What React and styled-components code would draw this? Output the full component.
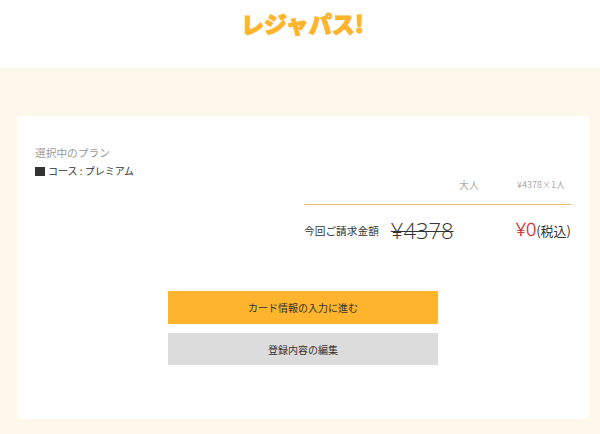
import React from "react";
import styled, { createGlobalStyle } from "styled-components";

const GlobalStyle = createGlobalStyle`
  html, body {
    margin: 0;
    padding: 0;
    background: #fff7ea;
    font-family: "Noto Sans CJK JP", "Noto Sans", sans-serif;
    color: #333;
  }
`;

export default function App() {
  return (
    <>
      <GlobalStyle />
      <Header>
        <Logo>レジャパス!</Logo>
      </Header>
      <Main>
        <Card>
          <Summary>
            <Plan>
              <PlanLabel>選択中のプラン</PlanLabel>
              <PlanCourse>
                <CourseMark />
                コース : プレミアム
              </PlanCourse>
            </Plan>
            <Billing>
              <PriceRow>
                <PersonType>大人</PersonType>
                <PersonPrice>¥4378×1人</PersonPrice>
              </PriceRow>
              <TotalRow>
                <TotalLabel>今回ご請求金額</TotalLabel>
                <OldPrice>¥4378</OldPrice>
                <Amount>
                  <NewPrice>¥0</NewPrice>
                  <Tax>(税込)</Tax>
                </Amount>
              </TotalRow>
            </Billing>
          </Summary>
          <Actions>
            <ActionButton $primary>カード情報の入力に進む</ActionButton>
            <ActionButton>登録内容の編集</ActionButton>
          </Actions>
        </Card>
      </Main>
    </>
  );
}

const Header = styled.header`
  display: flex;
  justify-content: center;
  align-items: flex-start;
  height: 68px;
  background: #fff;
`;

const Logo = styled.div`
  margin-top: 6px;
  margin-left: 5px;
  font-size: 23px;
  line-height: 34px;
  font-weight: 900;
  color: #feb42c;
  -webkit-text-stroke: 1px #feb42c;
`;

const Main = styled.main`
  height: 366px;
  padding: 48px 11px 15px 17px;
  box-sizing: border-box;
`;

const Card = styled.section`
  height: 303px;
  padding: 29px 18px 0;
  box-sizing: border-box;
  background: #fff;
`;

const Summary = styled.div`
  display: flex;
  justify-content: space-between;
  align-items: flex-start;
`;

const Plan = styled.div`
  display: flex;
  flex-direction: column;
  gap: 3px;
`;

const PlanLabel = styled.p`
  margin: 0;
  font-size: 10.7px;
  line-height: 15px;
  color: #999;
`;

const PlanCourse = styled.p`
  display: flex;
  align-items: center;
  gap: 3px;
  margin: 0;
  font-size: 10px;
  line-height: 16px;
  color: #333;
`;

const CourseMark = styled.span`
  width: 10px;
  height: 9px;
  background: #333;
`;

const Billing = styled.div`
  width: 267px;
  margin-top: 31px;
`;

const PriceRow = styled.div`
  display: flex;
  justify-content: flex-end;
  align-items: center;
  height: 17px;
  padding-right: 6px;
  padding-bottom: 11px;
  border-bottom: 1px solid #e6c26e;
`;

const PersonType = styled.span`
  font-size: 10px;
  color: #aaa;
`;

const PersonPrice = styled.span`
  margin-left: 38px;
  font-size: 9px;
  color: #aaa;
`;

const TotalRow = styled.div`
  display: flex;
  align-items: center;
  height: 28px;
  margin-top: 11px;
`;

const TotalLabel = styled.span`
  font-size: 10.7px;
  color: #333;
`;

const OldPrice = styled.span`
  margin-left: 12px;
  font-family: "Open Sans", sans-serif;
  font-size: 22px;
  font-weight: 300;
  line-height: 26px;
  color: #333;
  text-decoration: line-through;
  text-decoration-thickness: 1px;
`;

const Amount = styled.span`
  display: flex;
  align-items: baseline;
  margin-left: auto;
  margin-top: -2px;
`;

const NewPrice = styled.span`
  font-family: "Open Sans", sans-serif;
  font-size: 18px;
  font-weight: 300;
  color: #c8161d;
  -webkit-text-stroke: 0.3px #c8161d;
`;

const Tax = styled.span`
  font-size: 13px;
  color: #333;
`;

const Actions = styled.div`
  display: flex;
  flex-direction: column;
  align-items: center;
  gap: 9px;
  margin-top: 47px;
`;

const ActionButton = styled.button`
  width: 270px;
  height: ${(p) => (p.$primary ? "33px" : "32px")};
  padding: 0;
  border: 0;
  background: ${(p) => (p.$primary ? "#feb42c" : "#dcdcdc")};
  color: #333;
  font-family: inherit;
  font-size: 10px;
  cursor: pointer;
`;
